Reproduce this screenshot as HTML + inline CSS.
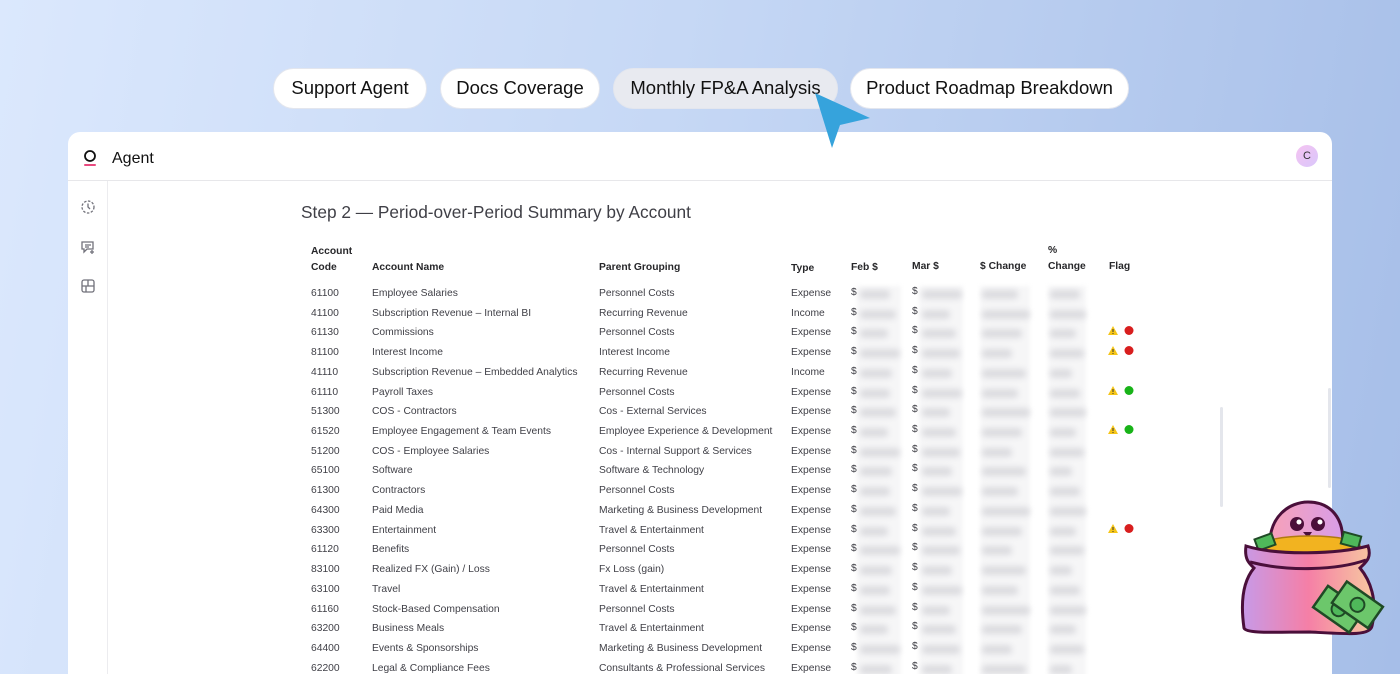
<!DOCTYPE html>
<html><head><meta charset="utf-8"><style>
*{margin:0;padding:0;box-sizing:border-box}
html,body{width:1400px;height:674px;overflow:hidden}
body{position:relative;font-family:"Liberation Sans",Arial,sans-serif;background:linear-gradient(100deg,#dbe8fd 0%,#c6d8f5 45%,#a6bee8 100%)}
.chip{position:absolute;top:68px;height:41px;border-radius:21px;background:#fff;border:1.5px solid #e3e6ee;font-size:18.5px;color:#111;line-height:38px;text-align:center}
.card{position:absolute;left:68px;top:132px;width:1264px;height:542px;background:#fff;border-radius:12px 12px 0 0;overflow:hidden}
.hdr{position:absolute;left:0;top:0;width:100%;height:49px;border-bottom:1px solid #e7e7ea}
.side{position:absolute;left:0;top:49px;width:40px;height:500px;border-right:1px solid #ececef}
.t{position:absolute;font-size:10.3px;color:#3f3f46;white-space:nowrap}
.h{font-weight:bold;color:#27272a}
.row{position:absolute;left:0;width:1400px;height:20px}
.bl{position:absolute;height:9px;background:#dcdce0;filter:blur(3px);border-radius:4px}
.strip{position:absolute;top:286px;height:400px;background:#f6f6f7;filter:blur(2px)}
</style></head><body>
<div class="chip" style="left:273px;width:154px">Support Agent</div>
<div class="chip" style="left:440px;width:160px">Docs Coverage</div>
<div class="chip" style="left:613px;width:225px;background:#e8eaf0">Monthly FP&amp;A Analysis</div>
<div class="chip" style="left:850px;width:279px">Product Roadmap Breakdown</div>

<div class="card">
 <div class="hdr">
  <svg style="position:absolute;left:15px;top:18px" width="14" height="17" viewBox="0 0 14 17"><circle cx="7" cy="6" r="5" fill="none" stroke="#111" stroke-width="1.8"/><rect x="1" y="14" width="12" height="2" rx="1" fill="#e84a7f"/></svg>
  <div style="position:absolute;left:44px;top:18px;font-size:16px;color:#111">Agent</div>
  <div style="position:absolute;left:1228px;top:13px;width:22px;height:22px;border-radius:50%;background:linear-gradient(135deg,#f5c4f1,#d9c6fb);font-size:11px;line-height:22px;text-align:center;color:#333">C</div>
 </div>
 <div class="side">
  <svg style="position:absolute;left:12px;top:18px" width="16" height="16" viewBox="0 0 16 16" fill="none" stroke="#71717a" stroke-width="1.3"><circle cx="8" cy="8" r="6" stroke-dasharray="2.5 1.5"/><path d="M8 4.5V8l2 2"/></svg>
  <svg style="position:absolute;left:12px;top:58px" width="16" height="16" viewBox="0 0 16 16" fill="none" stroke="#71717a" stroke-width="1.3"><path d="M2 3h11v7H7l-3 3v-3H2z"/><path d="M5 6h6M5 8h4M12 11v4M10 13h4"/></svg>
  <svg style="position:absolute;left:12px;top:97px" width="16" height="16" viewBox="0 0 16 16" fill="none" stroke="#71717a" stroke-width="1.3"><rect x="2" y="2" width="12" height="12" rx="2"/><path d="M2 8h12M8 2v6M6 8v6"/></svg>
 </div>
 <div style="position:absolute;left:1152px;top:275px;width:3px;height:100px;background:#e4e6ec;border-radius:2px"></div>
 <div style="position:absolute;left:1260px;top:256px;width:3px;height:100px;background:#e4e6ec;border-radius:2px"></div>
</div>

<div style="position:absolute;left:301px;top:202px;font-size:17.3px;color:#3f3f46">Step 2 — Period-over-Period Summary by Account</div>

<div class="t h" style="left:311px;top:246px">Account</div>
<div class="t h" style="left:311px;top:262px">Code</div>
<div class="t h" style="left:372px;top:262px">Account Name</div>
<div class="t h" style="left:599px;top:262px">Parent Grouping</div>
<div class="t h" style="left:791px;top:263px">Type</div>
<div class="t h" style="left:851px;top:262px">Feb $</div>
<div class="t h" style="left:912px;top:261px">Mar $</div>
<div class="t h" style="left:980px;top:261px">$ Change</div>
<div class="t h" style="left:1048px;top:245px">%</div>
<div class="t h" style="left:1048px;top:261px">Change</div>
<div class="t h" style="left:1109px;top:261px">Flag</div>

<div class="strip" style="left:857px;width:44px"></div>
<div class="strip" style="left:919px;width:44px"></div>
<div class="strip" style="left:980px;width:50px"></div>
<div class="strip" style="left:1048px;width:38px"></div>

<div id="rows"></div>
<script>
var d=[["61100","Employee Salaries","Personnel Costs","Expense",""],
["41100","Subscription Revenue – Internal BI","Recurring Revenue","Income",""],
["61130","Commissions","Personnel Costs","Expense","r"],
["81100","Interest Income","Interest Income","Expense","r"],
["41110","Subscription Revenue – Embedded Analytics","Recurring Revenue","Income",""],
["61110","Payroll Taxes","Personnel Costs","Expense","g"],
["51300","COS - Contractors","Cos - External Services","Expense",""],
["61520","Employee Engagement & Team Events","Employee Experience & Development","Expense","g"],
["51200","COS - Employee Salaries","Cos - Internal Support & Services","Expense",""],
["65100","Software","Software & Technology","Expense",""],
["61300","Contractors","Personnel Costs","Expense",""],
["64300","Paid Media","Marketing & Business Development","Expense",""],
["63300","Entertainment","Travel & Entertainment","Expense","r"],
["61120","Benefits","Personnel Costs","Expense",""],
["83100","Realized FX (Gain) / Loss","Fx Loss (gain)","Expense",""],
["63100","Travel","Travel & Entertainment","Expense",""],
["61160","Stock-Based Compensation","Personnel Costs","Expense",""],
["63200","Business Meals","Travel & Entertainment","Expense",""],
["64400","Events & Sponsorships","Marketing & Business Development","Expense",""],
["62200","Legal & Compliance Fees","Consultants & Professional Services","Expense",""]];
var h="";
d.forEach(function(r,i){
 var y=288+i*19.72;
 var w=[30,36,28,40,32][i%5],w2=[38,30,40,28,34][(i+2)%5],w3=[44,36,48,40,30][(i+1)%5],w4=[26,34,22,30,36][(i+3)%5];
 h+='<div class="row" style="top:'+y+'px">'+
 '<div class="t" style="left:311px;top:0">'+r[0]+'</div>'+
 '<div class="t" style="left:372px;top:0">'+r[1].replace(/&/g,"&amp;")+'</div>'+
 '<div class="t" style="left:599px;top:0">'+r[2].replace(/&/g,"&amp;")+'</div>'+
 '<div class="t" style="left:791px;top:0">'+r[3]+'</div>'+
 '<div class="t" style="left:851px;top:-1px">$</div>'+
 '<div class="t" style="left:912px;top:-2px">$</div>'+
 '<div class="bl" style="left:860px;top:2px;width:'+w+'px"></div>'+
 '<div class="bl" style="left:922px;top:2px;width:'+w2+'px"></div>'+
 '<div class="bl" style="left:982px;top:2px;width:'+w3+'px"></div>'+
 '<div class="bl" style="left:1050px;top:2px;width:'+w4+'px"></div>';
 if(r[4]){h+='<svg style="position:absolute;left:1108px;top:-2px" width="30" height="11" viewBox="0 0 30 11"><path d="M5 1L10 10H0z" fill="#f5c518"/><rect x="4.5" y="4" width="1" height="3" fill="#333"/><rect x="4.5" y="8" width="1" height="1" fill="#333"/><circle cx="21" cy="5.5" r="4.5" fill="'+(r[4]=="r"?"#d81e1e":"#18b318")+'"/></svg>';}
 h+='</div>';
});
document.getElementById("rows").innerHTML=h;
</script>

<svg style="position:absolute;left:813px;top:91px" width="62" height="60" viewBox="813 91 62 60"><path d="M815 93L870 118L840 125L832 148Z" fill="#36a3dc"/></svg>

<svg style="position:absolute;left:1238px;top:500px" width="148" height="146" viewBox="0 0 148 146">
<defs><linearGradient id="bg" x1="0" x2="1"><stop offset="0" stop-color="#c79ae8"/><stop offset=".5" stop-color="#f57fa6"/><stop offset="1" stop-color="#f7c9a0"/></linearGradient>
<linearGradient id="hd" x1="0" x2="1"><stop offset="0" stop-color="#f7a1b8"/><stop offset="1" stop-color="#d89de8"/></linearGradient></defs>
<path d="M32 48C30 16 52 2 70 2C92 2 108 18 104 48Z" fill="url(#hd)" stroke="#4a0f3a" stroke-width="3"/>
<circle cx="59" cy="24" r="7" fill="#4a0f3a"/><circle cx="80" cy="24" r="7" fill="#4a0f3a"/>
<circle cx="61" cy="22" r="2.5" fill="#fff"/><circle cx="82" cy="22" r="2.5" fill="#fff"/>
<path d="M65 32h9l-4 6z" fill="#4a0f3a"/>
<ellipse cx="72" cy="46" rx="50" ry="10" fill="#f2b320" stroke="#b07a10" stroke-width="1.5"/>
<rect x="18" y="36" width="18" height="12" fill="#4fb85a" stroke="#1f4a25" stroke-width="2" transform="rotate(-20 27 42)"/>
<rect x="104" y="34" width="18" height="12" fill="#4fb85a" stroke="#1f4a25" stroke-width="2" transform="rotate(15 113 40)"/>
<path d="M8 46C6 60 12 64 16 68C6 80 2 100 6 128C8 134 40 132 72 132C110 134 132 136 134 126C140 100 132 80 122 68C128 62 134 58 130 46C100 54 40 56 8 46Z" fill="url(#bg)" stroke="#4a0f3a" stroke-width="3"/>
<path d="M12 62C50 72 100 70 128 60" fill="none" stroke="#4a0f3a" stroke-width="3"/>
<g transform="rotate(35 100 110)"><rect x="78" y="96" width="44" height="26" fill="#6cc76b" stroke="#1f4a25" stroke-width="2.5"/><circle cx="100" cy="109" r="7" fill="#4fb85a" stroke="#1f4a25" stroke-width="2"/></g>
<g transform="rotate(35 120 104)"><rect x="98" y="92" width="44" height="26" fill="#6cc76b" stroke="#1f4a25" stroke-width="2.5"/><circle cx="120" cy="105" r="7" fill="#4fb85a" stroke="#1f4a25" stroke-width="2"/></g>
</svg>
</body></html>
